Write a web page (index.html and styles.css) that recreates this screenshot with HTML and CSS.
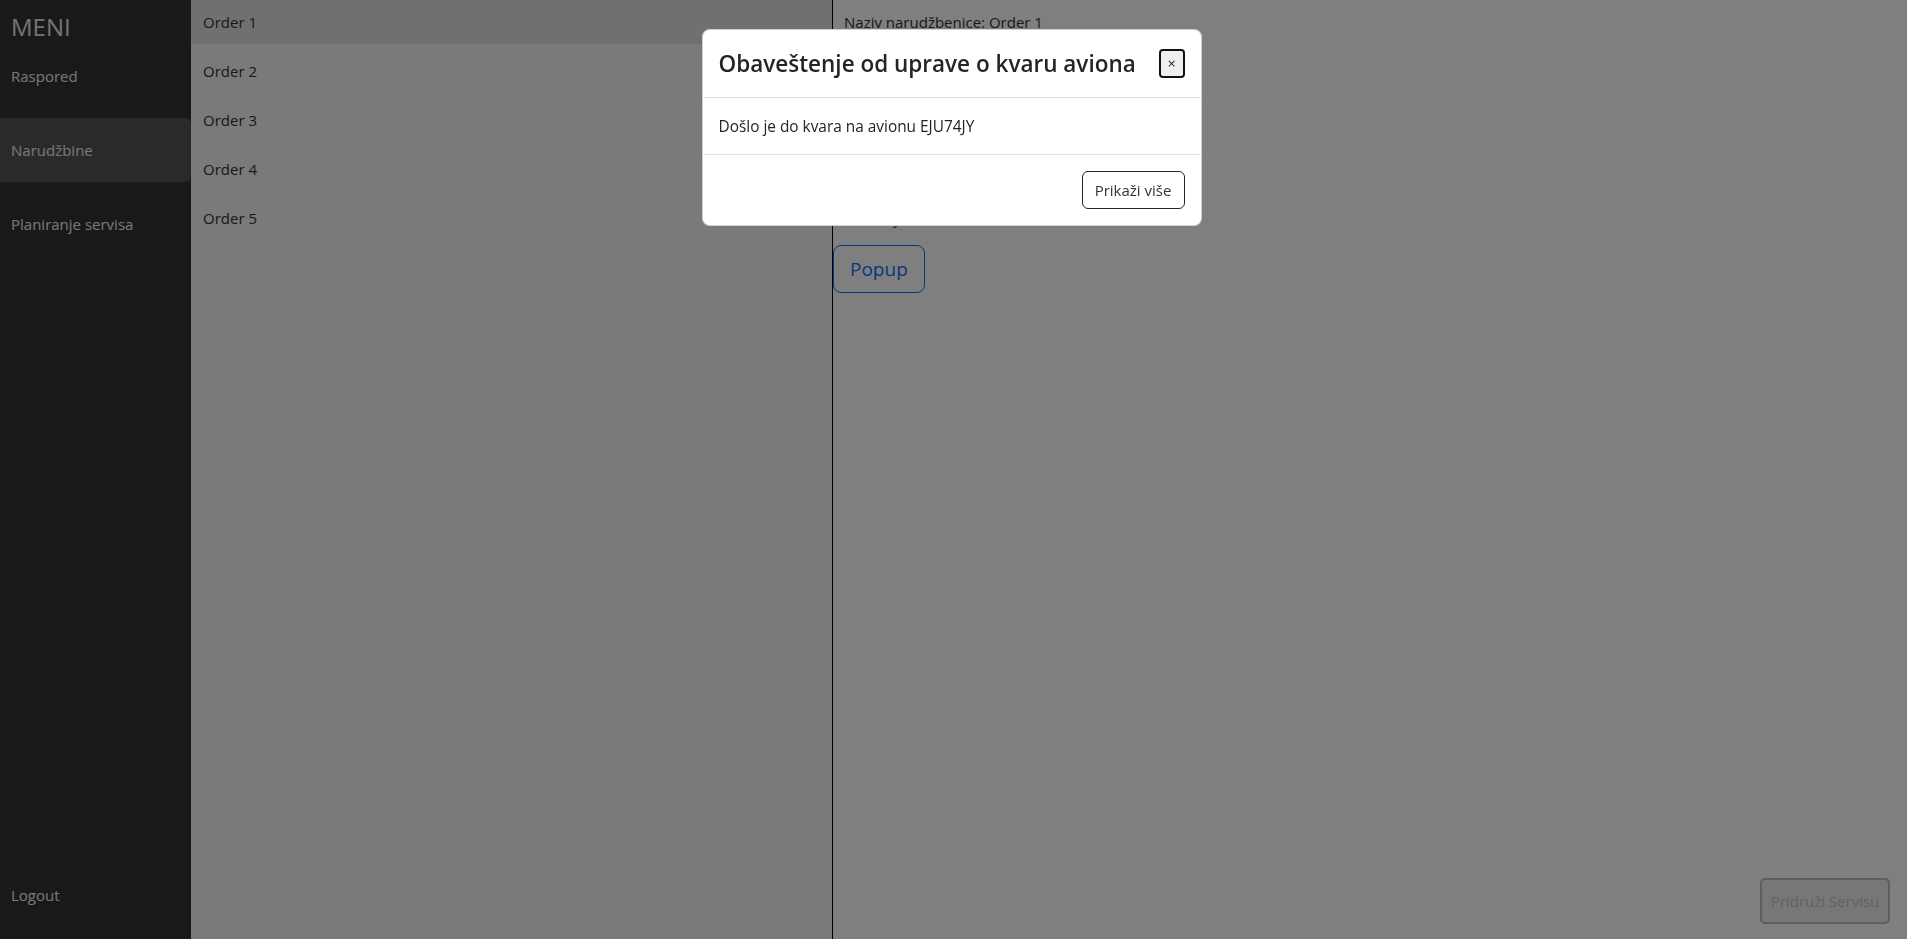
FILE: index.html
```html
<!DOCTYPE html>
<html lang="sr">
<head>
<meta charset="utf-8">
<title>Narudžbine</title>
<link rel="stylesheet" href="styles.css">
</head>
<body>
<div class="app">
  <aside class="sidebar">
    <div class="brand">MENI</div>
    <nav class="nav">
      <a class="nav-item">Raspored</a>
      <a class="nav-item active">Narudžbine</a>
      <a class="nav-item">Planiranje servisa</a>
    </nav>
    <a class="nav-item logout">Logout</a>
  </aside>
  <section class="orders">
    <div class="order selected">Order 1</div>
    <div class="order">Order 2</div>
    <div class="order">Order 3</div>
    <div class="order">Order 4</div>
    <div class="order">Order 5</div>
  </section>
  <main class="details">
    <div class="info">
      <div class="info-row">Naziv narudžbenice: Order 1</div>
      <div class="info-row">Datum narudžbine: 12.05.2023.</div>
      <div class="info-row">Broj delova: 4</div>
      <div class="info-row">Status: Na čekanju</div>
      <div class="info-row">Delivery: 14 dana</div>
    </div>
    <button class="btn-popup">Popup</button>
    <button class="btn-assign" disabled>Pridruži Servisu</button>
  </main>
</div>

<div class="backdrop">
  <div class="modal-dialog">
    <div class="modal-header">
      <h5 class="modal-title">Obaveštenje od uprave o kvaru aviona</h5>
      <button class="btn-close">×</button>
    </div>
    <div class="modal-body">Došlo je do kvara na avionu EJU74JY</div>
    <div class="modal-footer">
      <button class="btn-more">Prikaži više</button>
    </div>
  </div>
</div>
</body>
</html>
```
FILE: styles.css
```css
* { box-sizing: border-box; }
html, body { margin: 0; height: 100%; }
body {
  font-family: "Open Sans", "Noto Sans", sans-serif;
  font-size: 15px;
  color: #333;
  background: #fff;
  overflow: hidden;
}
.app {
  display: flex;
  height: 100vh;
}
.sidebar {
  width: 191px;
  flex: 0 0 191px;
  background: #333;
  display: flex;
  flex-direction: column;
  color: #eeeeee;
}
.brand {
  height: 44px;
  padding: 11px 11px 0;
  font-size: 24px;
  line-height: 32px;
  color: #e6e8ea;
}
.nav {
  display: flex;
  flex-direction: column;
  gap: 10px;
}
.nav-item {
  height: 64px;
  display: flex;
  align-items: center;
  padding: 0 11px;
  font-size: 15px;
  color: #eef0f2;
  border-radius: 0 6px 6px 0;
}
.nav-item.active { background: #555; }
.logout {
  margin-top: auto;
  margin-bottom: 12px;
}
.orders {
  width: 641px;
  flex: 0 0 641px;
  background: #f4f4f4;
  display: flex;
  flex-direction: column;
  gap: 5px;
}
.order {
  height: 44px;
  display: flex;
  align-items: center;
  padding: 0 12px;
  color: #333;
}
.order.selected { background: #e1e1e1; }
.details {
  flex: 1;
  border-left: 1px solid #000;
  display: flex;
  flex-direction: column;
  align-items: flex-start;
}
.info {
  display: flex;
  flex-direction: column;
  gap: 5px;
  padding: 0 11px;
}
.info-row {
  height: 44px;
  display: flex;
  align-items: center;
  color: #333;
}
.btn-popup {
  margin-top: 5px;
  height: 48px;
  padding: 0 16px;
  font-family: inherit;
  font-size: 19px;
  color: #0d6efd;
  background: transparent;
  border: 1px solid #0d6efd;
  border-radius: 8px;
}
.btn-assign {
  margin-top: auto;
  align-self: flex-end;
  margin-right: 17px;
  margin-bottom: 15px;
  width: 130px;
  height: 46px;
  font-family: inherit;
  font-size: 15px;
  color: #c4c4c4;
  background: #efefef;
  border: 2px solid #bbbbbb;
  border-radius: 5px;
}
.backdrop {
  position: fixed;
  inset: 0;
  padding-right: 4px;
  background: rgba(0, 0, 0, 0.5);
  display: flex;
  flex-direction: column;
  align-items: center;
}
.modal-dialog {
  margin-top: 29px;
  width: 500px;
  background: #fff;
  border: 1px solid rgba(0, 0, 0, 0.18);
  border-radius: 8px;
  color: #212529;
}
.modal-header {
  height: 68px;
  display: flex;
  align-items: center;
  justify-content: space-between;
  padding: 0 16px;
  border-bottom: 1px solid #dee2e6;
}
.modal-title {
  margin: 0;
  font-size: 22.5px;
  font-weight: 600;
  line-height: 36px;
}
.btn-close {
  width: 26px;
  height: 29px;
  padding: 0;
  border: 2px solid #111;
  border-radius: 4px;
  background: #efefef;
  font-family: "DejaVu Sans", sans-serif;
  font-size: 11px;
  color: #222;
}
.modal-body {
  height: 57px;
  display: flex;
  align-items: center;
  padding: 0 16px;
  font-size: 15.4px;
  border-bottom: 1px solid #dee2e6;
}
.modal-footer {
  height: 70px;
  display: flex;
  align-items: center;
  justify-content: flex-end;
  padding: 0 16px;
}
.btn-more {
  height: 38px;
  width: 103px;
  padding: 0;
  font-family: inherit;
  font-size: 15px;
  color: #333;
  background: #fff;
  border: 1px solid #212529;
  border-radius: 6px;
}
```
